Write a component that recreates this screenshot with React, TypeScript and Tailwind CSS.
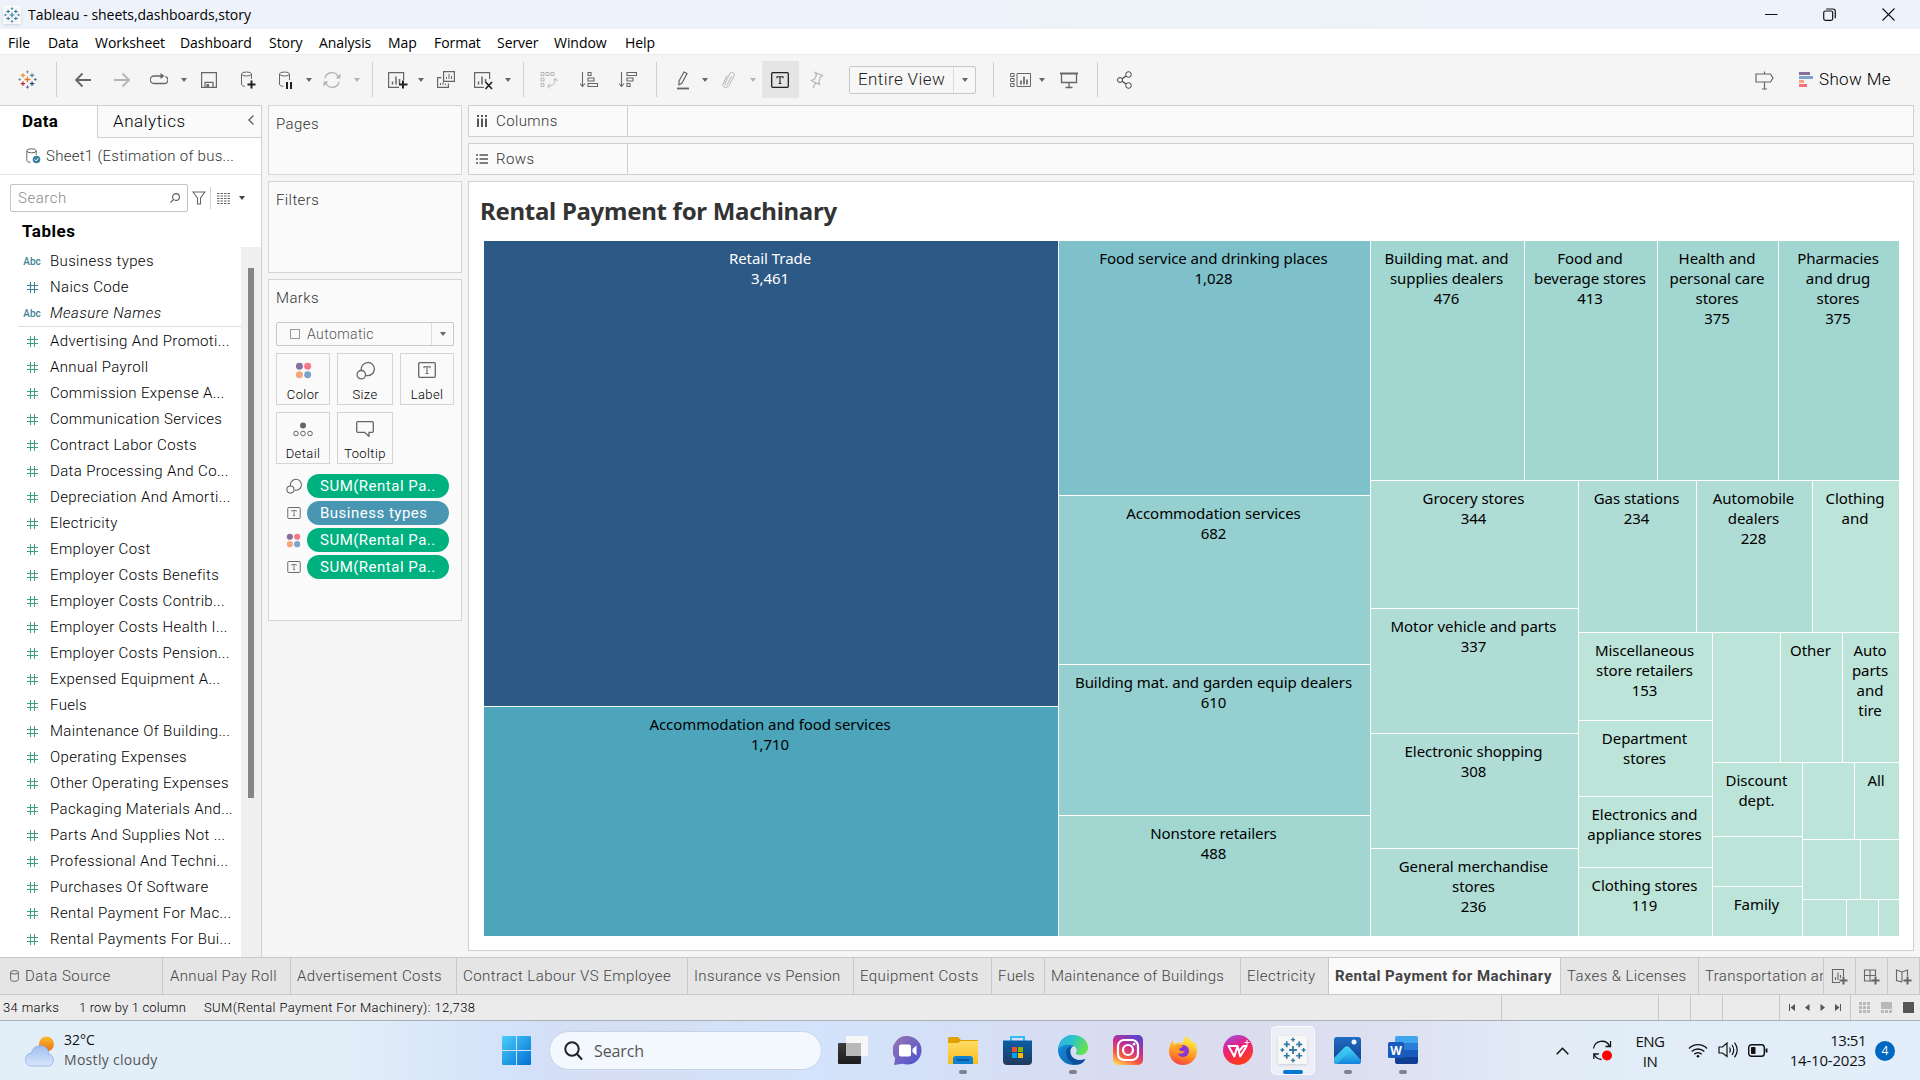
import React from "react";

const ui = "font-[Roboto,'Liberation_Sans',sans-serif] font-light";
const seg = "font-['Open_Sans','Noto_Sans',sans-serif]";
const G = "#666666";

/* ---------- small drawings ---------- */

function Caret({ c = G, className = "" }: { c?: string; className?: string }) {
  return (
    <svg width="6" height="4" viewBox="0 0 6 4" className={"shrink-0 " + className}>
      <path d="M0 0h6L3 4z" fill={c} />
    </svg>
  );
}

function Ico({ w, h = 20, className = "", children }: { w: number; h?: number; className?: string; children: React.ReactNode }) {
  return (
    <svg width={w} height={h} viewBox={`0 0 ${w} ${h}`} fill="none" stroke={G} className={"shrink-0 " + className}>
      {children}
    </svg>
  );
}

function Divider({ className = "" }: { className?: string }) {
  return <div className={"h-[35px] w-px shrink-0 bg-[#d0d0d0] " + className} />;
}

function plus(x: number, y: number, r: number, c: string, w = 1.2) {
  return <path key={`${x}-${y}`} d={`M${x - r} ${y}h${2 * r}M${x} ${y - r}v${2 * r}`} stroke={c} strokeWidth={w} />;
}

function TableauMark({ size, mono }: { size: number; mono?: boolean }) {
  const b = "#2f79a6";
  const c = (x: string) => (mono ? b : x);
  return (
    <svg width={size} height={size} viewBox="0 0 20 20" fill="none" className="shrink-0">
      {plus(10, 10, 3, c("#e8762c"), 1.4)}
      {plus(5.2, 5.6, 2.3, c("#eb9129"), 1.3)}
      {plus(14.8, 5.6, 2.3, c("#5b879b"), 1.3)}
      {plus(5.2, 14.4, 2.3, c("#c72035"), 1.3)}
      {plus(14.8, 14.4, 2.3, c("#1f447e"), 1.3)}
      {plus(10, 2, 1.6, c("#7199a6"), 1)}
      {plus(10, 18, 1.6, c("#5b6591"), 1)}
      {plus(1.8, 10, 1.5, c("#7199a6"), 1)}
      {plus(18.2, 10, 1.5, c("#5b6591"), 1)}
    </svg>
  );
}

function TBox({ w, h, c = G, className = "" }: { w: number; h: number; c?: string; className?: string }) {
  return (
    <svg width={w} height={h} viewBox="0 0 18 16" fill="none" stroke={c} className={"shrink-0 " + className}>
      <rect x=".7" y=".7" width="16.6" height="14.6" rx="1" strokeWidth="1.3" />
      <path d="M6 6.2V4.7h6v1.5M9 4.7v6.8M7.6 11.5h2.8" strokeWidth="1.1" />
    </svg>
  );
}

function SizeIcon({ size }: { size: number }) {
  return (
    <svg width={size} height={size} viewBox="0 0 18 18" fill="none" stroke={G} strokeWidth="1.2" className="shrink-0">
      <path d="M5.2 9.2A6.2 6.2 0 1 1 9.6 13.6" />
      <circle cx="5" cy="13" r="4" />
    </svg>
  );
}

function ColorIcon({ size }: { size: number }) {
  return (
    <svg width={size} height={size} viewBox="0 0 18 18" className="shrink-0">
      <circle cx="4.7" cy="4.5" r="3.7" fill="#8a6f9c" />
      <circle cx="13.4" cy="4.5" r="3.7" fill="#f2788a" />
      <circle cx="4.7" cy="13.4" r="3.7" fill="#f2a77f" />
      <circle cx="13.4" cy="13.4" r="3.7" fill="#7ba3cc" />
    </svg>
  );
}

function Cylinder({ className = "" }: { className?: string }) {
  return (
    <svg width="9" height="12" viewBox="0 0 9 12" fill="none" stroke="#666" className={"shrink-0 " + className}>
      <path d="M.6 2.3v7.2c0 2.4 7.8 2.4 7.8 0V2.3" />
      <ellipse cx="4.5" cy="2.3" rx="3.9" ry="1.7" />
    </svg>
  );
}

/* ---------- window chrome ---------- */

function TitleBar() {
  return (
    <div className={`flex h-[29px] shrink-0 items-center bg-linear-to-r from-[#eef2fb] from-50% via-[#edf3f6] via-60% to-[#eef2fb] to-80% ${seg}`}>
      <div className="ml-[3px] flex h-[19px] w-[18px] items-center justify-center bg-[#f8f8f8] shadow">
        <TableauMark size={16} mono />
      </div>
      <span className="ml-[7px] text-[14px] tracking-[-0.02px] text-black">Tableau - sheets,dashboards,story</span>
      <div className="mr-[25px] ml-auto flex items-center">
        <svg width="13" height="13" viewBox="0 0 13 13" stroke="#111" fill="none"><path d="M0 6.5h12.5" /></svg>
        <svg width="13" height="13" viewBox="0 0 13 13" stroke="#111" fill="none" strokeWidth="1.2" className="ml-[45px]">
          <rect x=".7" y="3" width="9" height="9.3" rx="1.8" />
          <path d="M3.2 1h6.6c1.6 0 2.5 1 2.5 2.5v6.7" />
        </svg>
        <svg width="13" height="13" viewBox="0 0 13 13" stroke="#111" fill="none" strokeWidth="1.1" className="ml-[46px]"><path d="M.5 .5l12 12M12.500 .5l-12 12" /></svg>
      </div>
    </div>
  );
}

function MenuBar() {
  const items: [string, string][] = [
    ["File", "w-[40px]"], ["Data", "w-[47px]"], ["Worksheet", "w-[85px]"], ["Dashboard", "w-[89px]"],
    ["Story", "w-[50px]"], ["Analysis", "w-[69px]"], ["Map", "w-[46px]"], ["Format", "w-[63px]"],
    ["Server", "w-[57px]"], ["Window", "w-[71px]"], ["Help", "w-[50px]"],
  ];
  return (
    <div className={`flex h-[25px] shrink-0 items-center bg-white pt-px pl-2 text-[14px] tracking-[-0.05px] text-black ${seg}`}>
      {items.map(([t, w]) => <span key={t} className={`${w} whitespace-nowrap`}>{t}</span>)}
    </div>
  );
}

function Toolbar() {
  const dim = "#b5b5b5";
  return (
    <div className={`flex h-[51px] shrink-0 items-center border-t border-[#ececec] bg-[#f5f5f5] pb-px ${ui}`}>
      <div className="ml-[18px]"><TableauMark size={19} /></div>
      <Divider className="ml-[19px]" />
      <Ico w={16} className="ml-[18px]"><path d="M16 10H1M7.500 3.500L1 10l6.500 6.500" strokeWidth="1.800" /></Ico>
      <Ico w={16} className="ml-[23px]"><path d="M0 10h15M8.500 3.500L15 10l-6.500 6.500" stroke={dim} strokeWidth="1.800" /></Ico>
      <Ico w={18} className="ml-[20px]"><path d="M11 6H4a3.500 3.500 0 0 0 0 7.500h10a3.500 3.500 0 0 0 1.500-6.800" strokeWidth="1.300" /><path d="M10.500 3l4 3-4 3z" fill={G} stroke="none" /></Ico>
      <Caret className="ml-[13px]" />
      <Ico w={16} className="ml-[14px]"><path d="M.6 2.600h14.800v14.800H.6zM4 17.400v-5h8v5" strokeWidth="1.200" /><path d="M5.500 14h2.500v3.400h-2.500z" fill={G} stroke="none" /></Ico>
      <Ico w={16} className="ml-[23px]"><ellipse cx="6.500" cy="4" rx="5" ry="2" /><path d="M1.500 4v10c0 1.500 1.500 2.300 3.500 2.300M11.500 4v5" /><path d="M11.500 10.500v8M7.500 14.500h8" stroke="#222" strokeWidth="2" /></Ico>
      <Ico w={16} className="ml-[22px]"><ellipse cx="6.500" cy="4" rx="5" ry="2" /><path d="M1.500 4v10c0 1.500 1.500 2.300 4 2.300M11.500 4v6" /><path d="M9 12v7M13 12v7" stroke="#222" strokeWidth="2" /></Ico>
      <Caret className="ml-[12px]" />
      <Ico w={18} className="ml-[11px]"><path d="M2 8a7 7 0 0 1 13-1.500M16 12a7 7 0 0 1-13 1.500" stroke={dim} strokeWidth="1.300" /><path d="M17.500 3.500v5h-5zM.5 16.500v-5h5z" fill={dim} stroke="none" /></Ico>
      <Caret c={dim} className="ml-[13px]" />
      <Divider className="ml-[12px]" />
      <Ico w={20} className="ml-[15px]"><path d="M11 17.400H.6V2.600h15V10" strokeWidth="1.200" /><path d="M4.500 14.500v-3M8 14.500v-8M11.500 14.500V9" strokeWidth="1.500" /><path d="M15 10.500v8M11 14.500h8.500" stroke="#222" strokeWidth="2" /></Ico>
      <Caret className="ml-[10px]" />
      <Ico w={18} className="ml-[13px]"><path d="M6.600 1.600h10.800v9.800H6.600zM4.500 7.600H.6v9.800h10.800v-4" strokeWidth="1.200" /><path d="M9.500 9V7M12 9V4M14.500 9V6M3.500 15v-2M6 15v-3M8.500 15v-1.500" /></Ico>
      <Ico w={20} className="ml-[19px]"><path d="M10 17.400H.6V2.600h15V9" strokeWidth="1.200" /><path d="M4.500 14.500v-3M8 14.500v-8M11.500 12V9" strokeWidth="1.500" /><path d="M11.500 12l6.500 7M18 12l-6.500 7" stroke="#222" strokeWidth="1.700" /></Ico>
      <Caret className="ml-[11px]" />
      <Divider className="ml-[12px]" />
      <Ico w={18} className="ml-[16px]"><path d="M1 2.500h3v3H1zM6 2.500h3v3H6zM11 2.500h3v3h-3zM1 8h3v3H1zM1 13.500h3v3H1zM8 16c5 0 7-2 7.500-7M13 10.500l2.500-2 2 2.500M10 13.500L7.500 16l2.500 2.500" stroke={dim} /></Ico>
      <Ico w={18} className="ml-[22px]"><path d="M2.500 2v14M0 13.500l2.500 3 2.500-3M8 2.500h3v3H8zM8 8h6v3H8zM8 13.500h9.500v3H8z" strokeWidth="1.100" /></Ico>
      <Ico w={18} className="ml-[21px]"><path d="M2.500 2v14M0 13.500l2.500 3 2.500-3M8 2.500h9.500v3H8zM8 8h6v3H8zM8 13.500h3v3H8z" strokeWidth="1.100" /></Ico>
      <Divider className="ml-[19px]" />
      <Ico w={14} className="ml-[19px]"><path d="M3 11L8 2l3 1.500-5 9.500-3 2z" strokeWidth="1.200" /><path d="M1 18.500h12" strokeWidth="1.800" /></Ico>
      <Caret className="ml-[12px]" />
      <Ico w={14} className="ml-[14px]"><path d="M9.500 6l-4 8c-1 1.800-3 .5-2.300-1L7.500 4c1.700-3.500 6-1 4.500 2l-5 9.500c-2.500 4-7.500 1.500-5.500-2.500L5 5.500" stroke={dim} /></Ico>
      <Caret c={dim} className="ml-[14px]" />
      <div className="ml-[6px] flex h-[37px] w-[37px] items-center justify-center bg-[#e5e5e5] pr-px"><TBox w={18} h={16} c="#222" /></div>
      <Ico w={14} className="ml-[11px]"><path d="M5 2.500l7.500 3-2 1.500-1.500 4 .5 3.500L1.500 10.500l3-1.500L6.500 5zM5.500 12.500L3 18" stroke={dim} strokeWidth="1.200" /></Ico>
      <div className="ml-[25px] flex h-[28px] w-[127px] items-center rounded-[2px] border border-[#c8c8c8] bg-[#f7f7f7] text-[17px] text-[#222]">
        <span className="w-[103px] pt-px pl-[8px] tracking-[0.4px] whitespace-nowrap">Entire View</span>
        <div className="flex h-full flex-1 items-center justify-center border-l border-[#dcdcdc]"><Caret /></div>
      </div>
      <Divider className="ml-[17px]" />
      <Ico w={22} className="ml-[16px]"><path d="M.6 3.500h3.500v3H.6zM.6 8.500h3.500v3H.6zM.6 13.500h3.500v3H.6zM7 3.500h13.500v13H7z" /><path d="M11 14.500v-4M14 14.500v-8M17 14.500v-5" strokeWidth="1.700" /></Ico>
      <Caret className="ml-[7px]" />
      <Ico w={18} className="ml-[15px]"><path d="M0 3.500h18" strokeWidth="2" /><path d="M1.500 4v8.500h15V4M9 12.500v5M5.500 17.500h7" strokeWidth="1.300" /></Ico>
      <Divider className="ml-[19px]" />
      <Ico w={16} className="ml-[19px]"><circle cx="3" cy="10" r="2.500" stroke="#444" /><circle cx="11.500" cy="4.500" r="2.800" stroke="#444" /><circle cx="11.500" cy="15.500" r="2.800" stroke="#444" /><path d="M5.200 8.800L9 6M5.200 11.200L9 14" stroke="#444" strokeWidth="1.300" /></Ico>
      <Ico w={20} className="ml-auto"><path d="M1 4h14.500l2.500 4-2.500 4H1zM9.500 12v7M7 19h5M9.500 1.500V4" strokeWidth="1.200" /></Ico>
      <svg width="14" height="15" viewBox="0 0 14 15" className="mb-px ml-[24px]">
        <path d="M0 0h11v3H0z" fill="#8a6f9c" /><path d="M0 4h14v3H0z" fill="#7ba3cc" /><path d="M0 8h5v3H0z" fill="#f2a77f" /><path d="M0 12h8v3H0z" fill="#f5707f" />
      </svg>
      <span className="mr-[30px] ml-[6px] w-[71px] text-[17px] tracking-[0.35px] whitespace-nowrap text-black">Show Me</span>
    </div>
  );
}

/* ---------- data pane ---------- */

const measures = [
  "Advertising And Promoti...", "Annual Payroll", "Commission Expense A...", "Communication Services",
  "Contract Labor Costs", "Data Processing And Co...", "Depreciation And Amorti...", "Electricity",
  "Employer Cost", "Employer Costs Benefits", "Employer Costs Contrib...", "Employer Costs Health I...",
  "Employer Costs Pension...", "Expensed Equipment A...", "Fuels", "Maintenance Of Building...",
  "Operating Expenses", "Other Operating Expenses", "Packaging Materials And...", "Parts And Supplies Not ...",
  "Professional And Techni...", "Purchases Of Software", "Rental Payment For Mac...", "Rental Payments For Bui...",
];

function Hash({ c }: { c: string }) {
  return (
    <svg width="11" height="11" viewBox="0 0 11 11" stroke={c} fill="none"><path d="M3.500 0v11M7.500 0v11M0 3.500h11M0 7.500h11" /></svg>
  );
}

function Field({ label, icon, italic }: { label: string; icon: React.ReactNode; italic?: boolean }) {
  return (
    <div className="flex h-[26px] items-center">
      <div className="flex w-[28px] justify-center">{icon}</div>
      <span className={"ml-[4px] text-[15px] whitespace-nowrap text-black " + (italic ? "tracking-[0.5px] italic" : "tracking-[0.36px]")}>{label}</span>
    </div>
  );
}

function DataPane() {
  const abc = <span className="text-[10px] font-medium text-[#3f7f96]">Abc</span>;
  return (
    <div className={`flex w-[262px] shrink-0 flex-col border-r border-[#d0d0d0] bg-white ${ui}`}>
      <div className="flex h-[33px] shrink-0 border-t border-[#d0d0d0]">
        <div className="w-[97px] pt-[4px] pl-[22px] text-[17px] leading-[23px] font-bold tracking-[0.3px] text-black">Data</div>
        <div className="flex flex-1 items-center border-b border-l border-[#d0d0d0] bg-[#fafafa] pl-[15px] text-[17px] tracking-[0.55px] text-black">
          Analytics
          <svg width="6" height="10" viewBox="0 0 6 10" fill="none" stroke="#555" strokeWidth="1.200" className="mr-[7px] mb-[3px] ml-auto"><path d="M5.500 .5L.8 5l4.700 4.500" /></svg>
        </div>
      </div>
      <div className="flex h-[37px] shrink-0 items-center border-b border-[#e2e2e2] pl-[26px] text-[15px] text-[#333]">
        <svg width="15" height="16" viewBox="0 0 15 16" fill="none" stroke="#666">
          <ellipse cx="5.500" cy="2.800" rx="4.700" ry="2" /><path d="M.8 2.800v9.500c0 1.300 1.500 2 3.700 2M10.200 2.800v4" />
          <circle cx="10.500" cy="11.500" r="3.800" fill="#3b82a0" stroke="none" /><path d="M8.800 11.500l1.300 1.400 2.200-2.600" stroke="#fff" />
        </svg>
        <span className="ml-[5px] tracking-[0.28px] whitespace-nowrap">Sheet1 (Estimation of bus...</span>
      </div>
      <div className="mt-[9px] ml-[10px] flex h-[28px] shrink-0 items-center">
        <div className="flex h-[28px] w-[178px] items-center justify-between rounded-[2px] border border-[#c4c4c4] pr-[7px] pl-[7px] text-[15px] tracking-[0.55px] text-[#888]">
          Search
          <svg width="10" height="10" viewBox="0 0 10 10" fill="none" stroke="#555" strokeWidth="1.100"><circle cx="6" cy="4" r="3.400" /><path d="M3.600 6.400L.4 9.600" /></svg>
        </div>
        <svg width="14" height="14" viewBox="0 0 14 14" fill="none" stroke="#666" strokeWidth="1.100" className="ml-[4px]"><path d="M1 1h12L8.500 7v6h-3V7z" /></svg>
        <div className="ml-[4px] h-[22px] w-px bg-[#d0d0d0]" />
        <svg width="13" height="11" viewBox="0 0 13 11" stroke="#666" className="ml-[6px]"><path d="M0 .5h13M0 3h13M0 5.500h13M0 8h13M0 10.500h13" strokeDasharray="2.500 1" /></svg>
        <Caret c="#444" className="ml-[9px]" />
      </div>
      <div className="mt-[7px] flex h-[26px] shrink-0 items-center pl-[22px] text-[17px] font-bold tracking-[0.5px] text-black">Tables</div>
      <div className="mt-[2px] flex min-h-0 flex-1">
        <div className="flex w-[241px] shrink-0 flex-col overflow-hidden pl-[18px]">
          <div className="mt-[1px] shrink-0 border-b border-[#ddd]">
            <Field label="Business types" icon={abc} />
            <Field label="Naics Code" icon={<Hash c="#3f7f96" />} />
            <Field label="Measure Names" icon={abc} italic />
          </div>
          <div className="mt-px shrink-0">
            {measures.map((m) => <Field key={m} label={m} icon={<Hash c="#3f9e7d" />} />)}
          </div>
        </div>
        <div className="flex-1 bg-[#efefef] pt-[21px] pl-[7px]"><div className="h-[530px] w-[6px] bg-[#858585]" /></div>
      </div>
    </div>
  );
}

/* ---------- cards ---------- */

function MarkButton({ label, w, children }: { label: string; w: string; children: React.ReactNode }) {
  return (
    <div className={`${w} flex h-[52px] flex-col items-center border border-[#d4d4d4] bg-[#fafafa]`}>
      <div className="mt-[7px] flex h-[18px] items-center">{children}</div>
      <span className="mt-[8px] text-[13px] leading-[16px] tracking-[0.4px] text-black">{label}</span>
    </div>
  );
}

function Pill({ label, color, icon }: { label: string; color: string; icon: React.ReactNode }) {
  return (
    <div className="flex h-[24px] items-center">
      <div className="flex w-[36px] justify-center pl-[13px]">{icon}</div>
      <div className={`${color} ml-[2px] flex h-[24px] w-[142px] items-center rounded-full pt-px pl-[13px] text-[15px] font-normal tracking-[0.5px] whitespace-nowrap text-white`}>{label}</div>
    </div>
  );
}

function Cards() {
  const card = "border border-[#d4d4d4] bg-[#fafafa] text-[#333] text-[15px] shrink-0 tracking-[0.4px]";
  return (
    <div className={`ml-[6px] flex w-[194px] shrink-0 flex-col ${ui}`}>
      <div className={`${card} h-[70px] pt-[7px] pl-[7px]`}>Pages</div>
      <div className={`${card} mt-[6px] h-[92px] pt-[7px] pl-[7px]`}>Filters</div>
      <div className={`${card} mt-[6px] h-[342px] pl-[7px]`}>
        <div className="mt-[7px] h-[22px]">Marks</div>
        <div className="mt-[13px] flex h-[24px] w-[178px] items-center rounded-[2px] border border-[#c8c8c8] text-[14px] text-[#555]">
          <div className="ml-[13px] h-[10px] w-[10px] border border-[#999]" />
          <span className="ml-[7px]">Automatic</span>
          <div className="ml-auto flex h-full w-[22px] items-center justify-center border-l border-[#ddd]"><Caret /></div>
        </div>
        <div className="mt-[7px] flex gap-[7px]">
          <MarkButton label="Color" w="w-[54px]"><ColorIcon size={17} /></MarkButton>
          <MarkButton label="Size" w="w-[56px]"><SizeIcon size={19} /></MarkButton>
          <MarkButton label="Label" w="w-[54px]"><TBox w={18} h={16} /></MarkButton>
        </div>
        <div className="mt-[7px] flex gap-[7px]">
          <MarkButton label="Detail" w="w-[54px]">
            <svg width="20" height="15" viewBox="0 0 20 15" fill="none" stroke={G}><circle cx="10" cy="3.500" r="3" fill={G} stroke="none" /><circle cx="3" cy="11.500" r="2.300" /><circle cx="10" cy="11.500" r="2.300" /><circle cx="17" cy="11.500" r="2.300" /></svg>
          </MarkButton>
          <MarkButton label="Tooltip" w="w-[56px]">
            <svg width="18" height="16" viewBox="0 0 18 16" fill="none" stroke={G} strokeWidth="1.300"><path d="M1.700 .7h14.600q1 0 1 1v8.600q0 1-1 1H13v4L8.500 11.300H1.700q-1 0-1-1V1.700q0-1 1-1z" /></svg>
          </MarkButton>
        </div>
        <div className="mt-[10px] -ml-[7px] flex flex-col gap-[3px]">
          <Pill label="SUM(Rental Pa.." color="bg-[#00b180]" icon={<SizeIcon size={16} />} />
          <Pill label="Business types" color="bg-[#4996b2]" icon={<TBox w={14} h={12} />} />
          <Pill label="SUM(Rental Pa.." color="bg-[#00b180]" icon={<ColorIcon size={15} />} />
          <Pill label="SUM(Rental Pa.." color="bg-[#00b180]" icon={<TBox w={14} h={12} />} />
        </div>
      </div>
    </div>
  );
}

/* ---------- treemap ---------- */

type Node = { size?: number; dir?: "row" | "col"; kids?: Node[]; text?: string; bg?: string };

const light = "bg-[#bce4d8]";
const mid = "bg-[#b0dcd6]";
const teal = "bg-[#a1d6d1]";

const tree: Node = {
  dir: "row",
  kids: [
    { size: 574, dir: "col", kids: [
      { size: 465, text: "Retail Trade\n3,461", bg: "bg-[#2c5985] text-white" },
      { text: "Accommodation and food services\n1,710", bg: "bg-[#4ca5bb]" },
    ] },
    { size: 311, dir: "col", kids: [
      { size: 254, text: "Food service and drinking places\n1,028", bg: "bg-[#7ec1ca]" },
      { size: 168, text: "Accommodation services\n682", bg: "bg-[#95cfcf]" },
      { size: 150, text: "Building mat. and garden equip dealers\n610", bg: "bg-[#95cfcf]" },
      { text: "Nonstore retailers\n488", bg: teal },
    ] },
    { dir: "col", kids: [
      { size: 239, dir: "row", kids: [
        { size: 153, text: "Building mat. and\nsupplies dealers\n476", bg: teal },
        { size: 132, text: "Food and\nbeverage stores\n413", bg: teal },
        { size: 120, text: "Health and\npersonal care\nstores\n375", bg: teal },
        { text: "Pharmacies\nand drug\nstores\n375", bg: teal },
      ] },
      { dir: "row", kids: [
        { size: 207, dir: "col", kids: [
          { size: 127, text: "Grocery stores\n344", bg: mid },
          { size: 124, text: "Motor vehicle and parts\n337", bg: mid },
          { size: 114, text: "Electronic shopping\n308", bg: mid },
          { text: "General merchandise\nstores\n236", bg: mid },
        ] },
        { dir: "col", kids: [
          { size: 151, dir: "row", kids: [
            { size: 117, text: "Gas stations\n234", bg: mid },
            { size: 115, text: "Automobile\ndealers\n228", bg: mid },
            { text: "Clothing\nand", bg: light },
          ] },
          { dir: "row", kids: [
            { size: 133, dir: "col", kids: [
              { size: 87, text: "Miscellaneous\nstore retailers\n153", bg: light },
              { size: 75, text: "Department\nstores", bg: light },
              { size: 70, text: "Electronics and\nappliance stores", bg: light },
              { text: "Clothing stores\n119", bg: light },
            ] },
            { dir: "col", kids: [
              { size: 129, dir: "row", kids: [
                { size: 67, bg: light }, { size: 61, text: "Other", bg: light }, { text: "Auto\nparts\nand\ntire", bg: light },
              ] },
              { dir: "row", kids: [
                { size: 89, dir: "col", kids: [
                  { size: 73, text: "Discount\ndept.", bg: light }, { size: 49, bg: light }, { text: "Family", bg: light },
                ] },
                { dir: "col", kids: [
                  { size: 76, dir: "row", kids: [{ size: 51, bg: light }, { text: "All", bg: light }] },
                  { size: 59, dir: "row", kids: [{ size: 57, bg: light }, { bg: light }] },
                  { dir: "row", kids: [{ size: 43, bg: light }, { size: 31, bg: light }, { bg: light }] },
                ] },
              ] },
            ] },
          ] },
        ] },
      ] },
    ] },
  ],
};

function Cell({ node }: { node: Node }) {
  const flex = node.size ? `0 0 ${node.size}px` : "1 1 0px";
  if (node.kids) {
    return (
      <div style={{ flex }} className={"flex min-h-0 min-w-0 gap-px " + (node.dir === "row" ? "flex-row" : "flex-col")}>
        {node.kids.map((k, i) => <Cell key={i} node={k} />)}
      </div>
    );
  }
  return (
    <div style={{ flex }} className={`min-h-0 min-w-0 overflow-hidden pt-[7px] pr-[2px] text-center text-[15px] leading-[20px] tracking-[-0.05px] whitespace-pre ${node.bg}`}>
      {node.text}
    </div>
  );
}

function Shelf({ label, children }: { label: string; children: React.ReactNode }) {
  return (
    <div className={`mb-[6px] flex h-[32px] shrink-0 border border-[#d0d0d0] bg-[#fafafa] ${ui}`}>
      <div className="flex w-[159px] items-center border-r border-[#d0d0d0] pl-[7px] text-[15px] tracking-[0.4px] text-[#333]">
        {children}
        <span className="mt-px ml-[8px]">{label}</span>
      </div>
    </div>
  );
}

function Worksheet() {
  return (
    <div className="mr-[6px] ml-[6px] flex min-w-0 flex-1 flex-col">
      <Shelf label="Columns">
        <svg width="12" height="12" viewBox="0 0 12 12" stroke="#555" strokeWidth="2"><path d="M2 0v2M6 0v2M10 0v2M2 3.500V12M6 3.500V12M10 3.500V12" /></svg>
      </Shelf>
      <Shelf label="Rows">
        <svg width="12" height="12" viewBox="0 0 12 12" stroke="#555" strokeWidth="1.700"><path d="M0 2h2M0 6h2M0 10h2M3.500 2H12M3.500 6H12M3.500 10H12" /></svg>
      </Shelf>
      <div className="mb-[6px] flex min-h-0 flex-1 flex-col border border-[#d0d0d0] bg-white font-['Noto_Sans','Open_Sans',sans-serif]">
        <h1 className="h-[59px] pt-[14px] pl-[11px] text-[24px] leading-[30px] font-bold tracking-[-0.28px] text-[#333]">Rental Payment for Machinary</h1>
        <div className="ml-[15px] flex h-[695px] w-[1415px] text-black"><Cell node={tree} /></div>
      </div>
    </div>
  );
}

/* ---------- sheet tabs and status ---------- */

function SheetTabs() {
  const tabs: [string, string][] = [
    ["Annual Pay Roll", "w-[128px] pl-[7px] tracking-[0.35px]"], ["Advertisement Costs", "w-[166px] pl-[6px] tracking-[0.4px]"],
    ["Contract Labour VS Employee", "w-[231px] pl-[6px] tracking-[0.45px]"], ["Insurance vs Pension", "w-[166px] pl-[6px] tracking-[0.35px]"],
    ["Equipment Costs", "w-[138px] pl-[6px] tracking-[0.4px]"], ["Fuels", "w-[53px] pl-[6px] tracking-[0.35px]"],
    ["Maintenance of Buildings", "w-[196px] pl-[6px] tracking-[0.3px]"], ["Electricity", "w-[88px] pl-[6px] tracking-[0.45px]"],
    ["Rental Payment for Machinary", "w-[232px] pl-[6px] bg-[#fafafa] font-bold text-[#444] tracking-[0.45px] pb-px"],
    ["Taxes & Licenses", "w-[138px] pl-[6px] tracking-[0.4px]"], ["Transportation and", "w-[125px] pl-[6px] tracking-[0.35px]"],
  ];
  const book = [
    <path key="a" d="M9 14.500H1.500V1.500h11V8M4.500 12V9M7 12V4.500M9.500 10V7" />,
    <path key="b" d="M9 13H1.500V2h11v6M1.500 7.500h11M7 2v11" />,
    <path key="c" d="M7 14l-5.500-1.500V2L7 4l5.500-2v6M7 4v10" />,
  ];
  return (
    <div className={`flex h-[38px] shrink-0 border-t border-b border-[#c8c8c8] bg-[#e5e5e5] text-[15px] text-[#444] ${ui}`}>
      <div className="flex w-[163px] shrink-0 items-center border-r border-[#c8c8c8] pt-px pl-[10px]">
        <Cylinder className="mb-[2px]" />
        <span className="ml-[6px] tracking-[0.5px]">Data Source</span>
      </div>
      {tabs.map(([t, c]) => (
        <div key={t} className={`flex shrink-0 items-center overflow-hidden border-r border-[#c8c8c8] pt-px whitespace-nowrap ${c}`}>{t}</div>
      ))}
      {book.map((p, i) => (
        <div key={i} className="flex w-[32px] shrink-0 items-center justify-center border-r border-[#c8c8c8]">
          <svg width="17" height="17" viewBox="0 0 17 17" fill="none" stroke="#666" strokeWidth="1.100">{p}<path d="M12.500 8.500v8M8.500 12.500h8" strokeWidth="2" /></svg>
        </div>
      ))}
    </div>
  );
}

function StatusBar() {
  return (
    <div className={`flex h-[26px] shrink-0 border-b border-[#a9aeb8] bg-[#ebebeb] text-[13px] text-black ${ui}`}>
      <span className="w-[76px] pl-[3px] leading-[25px] tracking-[0.35px]">34 marks</span>
      <span className="w-[128px] pl-[3px] leading-[25px] tracking-[0.15px]">1 row by 1 column</span>
      <span className="leading-[25px] tracking-[0.4px]">SUM(Rental Payment For Machinery): 12,738</span>
      <div className="ml-auto flex">
        <div className="w-[157px] border-l border-[#c8c8c8]" />
        <div className="w-[32px] border-l border-[#c8c8c8]" />
        <div className="w-[32px] border-l border-[#c8c8c8]" />
        <div className="w-[57px] border-l border-[#c8c8c8]" />
        <div className="flex w-[71px] items-center gap-[10px] border-l border-[#c8c8c8] pl-[9px]">
          <svg width="6" height="7" viewBox="0 0 6 7" fill="#555"><path d="M0 0h1v7H0zM6 0v7L1.500 3.500z" /></svg>
          <svg width="5" height="7" viewBox="0 0 5 7" fill="#555"><path d="M4.500 0v7L0 3.500z" /></svg>
          <svg width="5" height="7" viewBox="0 0 5 7" fill="#555"><path d="M.5 0v7L5 3.500z" /></svg>
          <svg width="6" height="7" viewBox="0 0 6 7" fill="#555"><path d="M5 0h1v7H5zM0 0v7l4.500-3.500z" /></svg>
        </div>
        <div className="flex w-[70px] items-center gap-[11px] border-l border-[#c8c8c8] pl-[8px]">
          <svg width="11" height="11" viewBox="0 0 11 11" fill="#b8b8b8"><path d="M0 0h3v3H0zM4 0h3v3H4zM8 0h3v3H8zM0 4h3v3H0zM4 4h3v3H4zM8 4h3v3H8zM0 8h3v3H0zM4 8h3v3H4zM8 8h3v3H8z" /></svg>
          <svg width="11" height="11" viewBox="0 0 11 11" fill="#b8b8b8"><path d="M0 0h11v7H0zM0 8h3v3H0zM4 8h3v3H4zM8 8h3v3H8z" /></svg>
          <div className="h-[11px] w-[11px] bg-[#555]" />
        </div>
      </div>
    </div>
  );
}

/* ---------- taskbar ---------- */

function AppSlot({ mark, active, children }: { mark?: boolean; active?: boolean; children: React.ReactNode }) {
  return (
    <div className="flex w-[55px] justify-center pt-[5px]">
      <div className={"flex h-[49px] w-[44px] flex-col items-center rounded-[5px] " + (active ? "border border-white/70 bg-white/50 pt-[8px]" : "pt-[9px]")}>
        <div className="flex h-[30px] items-center">{children}</div>
        {mark && <div className="mt-[5px] h-[4px] w-[8px] rounded-full bg-[#7d828c]" />}
        {active && <div className="mt-[5px] h-[4px] w-[20px] rounded-full bg-[#0078d4]" />}
      </div>
    </div>
  );
}

function Grad({ id, a, b, c, x2 = 0, y2 = 1 }: { id: string; a: string; b: string; c?: string; x2?: number; y2?: number }) {
  return (
    <linearGradient id={id} x1="0" y1="0" x2={x2} y2={y2}>
      <stop offset="0" stopColor={a} />
      {c && <stop offset=".5" stopColor={c} />}
      <stop offset="1" stopColor={b} />
    </linearGradient>
  );
}

function Taskbar() {
  return (
    <div className={`flex min-h-0 flex-1 bg-[linear-gradient(90deg,#e2eef8_0%,#e2eef8_18%,#d3e1fa_27%,#d6def3_32%,#d2e3fb_42%,#d6dff6_52%,#d9dbee_60%,#dde0f0_72%,#e1ecf7_80%,#e2eef9_100%)] ${seg}`}>
      <div className="flex w-[489px] shrink-0 pl-[25px]">
        <svg width="31" height="31" viewBox="0 0 31 31" className="mt-[15px]">
          <defs><Grad id="sun" a="#f7c02f" b="#ee6b16" /><Grad id="cl" a="#9fbdf0" b="#d9e6fb" /></defs>
          <circle cx="21.500" cy="8" r="7.500" fill="url(#sun)" />
          <path d="M7 30a6.500 6.500 0 0 1-.5-13A9 9 0 0 1 22 12.500a6 6 0 0 1 1.500 5.500 6.200 6.200 0 0 1 .5 12z" fill="url(#cl)" stroke="#8aabe8" strokeWidth=".7" />
        </svg>
        <div className="mt-[9px] ml-[8px] text-[14px] leading-[20px] text-[#111]">
          <div>32°C</div>
          <div className="tracking-[0.3px] text-[#555]">Mostly cloudy</div>
        </div>
      </div>
      <div className="flex w-[60px] shrink-0 justify-center pr-[6px]">
        <svg width="29" height="29" viewBox="0 0 29 29" className="mt-[15px]">
          <defs><Grad id="win" a="#4ccdfb" b="#0070d2" x2={1} /></defs>
          <path d="M0 1q0-1 1-1h13v14H0zM15 0h13q1 0 1 1v13H15zM0 15h14v14H1q-1 0-1-1zM15 15h14v13q0 1-1 1H15z" fill="url(#win)" />
        </svg>
      </div>
      <div className="mt-[10px] flex h-[39px] w-[273px] shrink-0 items-center rounded-full border border-[#c9d3e6] bg-[#f3f7fe] pl-[14px] text-[16px] text-[#555]">
        <svg width="19" height="19" viewBox="0 0 19 19" fill="none" stroke="#222" strokeWidth="2"><circle cx="8" cy="8" r="6.700" /><path d="M13 13l4.500 5" strokeLinecap="round" /></svg>
        <span className="ml-[11px] tracking-[-0.1px]">Search</span>
      </div>
      <div className="ml-[3px] flex shrink-0">
        <AppSlot>
          <svg width="30" height="28" viewBox="0 0 30 28"><defs><Grad id="tv" a="#3c3c3c" b="#1c1c1c" /></defs><rect y="7" width="23" height="21" rx="1" fill="url(#tv)" /><rect x="8" width="22" height="20" rx="1" fill="#f7f7f7" /><path d="M8 7h15v13H8z" fill="#b9b9b9" /></svg>
        </AppSlot>
        <AppSlot>
          <svg width="29" height="29" viewBox="0 0 29 29"><defs><Grad id="ch" a="#9a78b4" b="#4a50cf" x2={1} /></defs><path d="M14.500 0a14.300 14.300 0 1 1-5 27.800L1 29l1.200-6.500A14.300 14.300 0 0 1 14.500 0z" fill="url(#ch)" /><rect x="6" y="8.500" width="12" height="12" rx="2" fill="#fff" /><path d="M19.500 13l4-3.500v10l-4-3.500z" fill="#fff" /></svg>
        </AppSlot>
        <AppSlot mark>
          <svg width="30" height="27" viewBox="0 0 30 27"><defs><Grad id="fo" a="#ffdc66" b="#fbbc1c" /></defs><path d="M0 1.500Q0 0 1.500 0H10l3 3h17v8H0z" fill="#dfa000" /><path d="M0 6h10l3-2h17v23H0z" fill="url(#fo)" /><path d="M5 27v-5q0-3 3-3h14q3 0 3 3v5z" fill="#0f7fcf" /><path d="M9 23h12" stroke="#0b4f93" strokeWidth="1.500" /></svg>
        </AppSlot>
        <AppSlot>
          <svg width="29" height="29" viewBox="0 0 29 29"><defs><Grad id="st" a="#0a5ea8" b="#223a5c" /></defs><path d="M8 6V1h13v5" fill="none" stroke="#31bdf3" strokeWidth="2" /><path d="M0 4.500h29V25q0 4-4 4H4q-4 0-4-4z" fill="url(#st)" /><path d="M9 11h5v5H9z" fill="#f25022" /><path d="M15 11h5v5h-5z" fill="#7fba00" /><path d="M9 17h5v5H9z" fill="#00a4ef" /><path d="M15 17h5v5h-5z" fill="#ffb900" /></svg>
        </AppSlot>
        <AppSlot mark>
          <svg width="30" height="30" viewBox="0 0 30 30">
            <defs><Grad id="e1" a="#2fb3ea" b="#63e052" x2={1} y2={0.3} c="#2bc3c9" /><Grad id="e2" a="#1796e6" b="#0c59a4" x2={1} /></defs>
            <path d="M15 0a15 15 0 0 0 0 30c5 0 9.500-2 12-6-5 2-12 1-14-4-1.500-4 0-8 3-9z" fill="url(#e2)" />
            <path d="M.2 14C1 5.500 7 0 15 0c9 0 15 6 15 12.500 0 5-4 7.500-8 7.500-3 0-4.500-1-4-2 2-3 0-7-5-8-5-.9-10 .5-12.800 4z" fill="url(#e1)" />
            <path d="M8 17c0 7 6 13 13 12.500 2.500-.5 5-2.500 6.500-5.500-6 3-15 .5-15.500-8 0-2 .5-3.500 1.500-4.500C10 12 8 14 8 17z" fill="#0c4f9a" />
          </svg>
        </AppSlot>
        <AppSlot>
          <svg width="30" height="30" viewBox="0 0 30 30" fill="none">
            <defs><linearGradient id="ig" x1=".2" y1="1" x2=".7" y2="0"><stop offset="0" stopColor="#ffd25a" /><stop offset=".3" stopColor="#f4583f" /><stop offset=".6" stopColor="#c92d8f" /><stop offset="1" stopColor="#5b45c9" /></linearGradient></defs>
            <rect width="30" height="30" rx="5" fill="url(#ig)" /><rect x="5" y="5" width="20" height="20" rx="6" stroke="#fff" strokeWidth="2.200" /><circle cx="15" cy="15" r="5" stroke="#fff" strokeWidth="2.200" /><circle cx="21" cy="9.200" r="1.400" fill="#fff" />
          </svg>
        </AppSlot>
        <AppSlot>
          <svg width="28" height="29" viewBox="0 0 28 29">
            <defs><Grad id="ff" a="#ffdf3a" b="#ee1561" c="#ff8a1f" x2={-0.3} /></defs>
            <path d="M18 0c1 3 5 5 6.500 7l.3-1.500C27 8 28 11.500 28 15a14 14 0 0 1-28 0C0 11 1.500 7 3.500 4.500L5 8c1.500-.8 3-1 4.500-.7L11 5c0 1.500.5 2.500 1.500 3.500C14.500 5 15 2 18 0z" fill="url(#ff)" />
            <circle cx="14" cy="15" r="6" fill="#8a36d6" /><path d="M7 9c3-1 6 0 7 1.500-1 1.500-3.500 1-4 3 1 2 4 2 6 1-1 4-8 4.500-9.500 0-.6-2-.5-4 .5-5.500z" fill="#ff9a26" />
          </svg>
        </AppSlot>
        <AppSlot>
          <svg width="30" height="30" viewBox="0 0 30 30" fill="none">
            <defs><Grad id="wp" a="#8e55f0" b="#ff3a1f" c="#ed1e79" x2={0.4} /></defs>
            <circle cx="15" cy="15" r="15" fill="url(#wp)" /><path d="M5.500 11h9l-3.200 10.500zM14.500 11l2.700 10.500 6.500-10.500h-3.200l-4.500 5" stroke="#fff" strokeWidth="2" strokeLinejoin="round" strokeLinecap="round" /><path d="M24 5v5M21.500 7.500h5" stroke="#fff" />
          </svg>
        </AppSlot>
        <AppSlot active>
          <div className="flex h-[28px] w-[29px] items-center justify-center bg-[#f7f7f5] shadow"><TableauMark size={26} mono /></div>
        </AppSlot>
        <AppSlot mark>
          <svg width="27" height="27" viewBox="0 0 27 27"><defs><Grad id="ph" a="#1f6bc4" b="#123f8c" /><Grad id="p2" a="#45e0f5" b="#1583dc" /></defs><rect width="27" height="27" rx="3" fill="url(#ph)" /><path d="M0 21L11 10q2-1.500 4 0l12 13v1q0 3-3 3H3q-3 0-3-3z" fill="url(#p2)" /><path d="M11 10L0 21v3q0 3 3 3l14-14.500z" fill="#3cc7f0" opacity=".6" /><circle cx="20" cy="5" r="2.500" fill="#eef6ff" /></svg>
        </AppSlot>
        <AppSlot mark>
          <svg width="30" height="28" viewBox="0 0 30 28"><path d="M7 2q0-2 2-2h19q2 0 2 2v5H7z" fill="#41a5ee" /><path d="M7 7h23v7H7z" fill="#2b7cd3" /><path d="M7 14h23v7H7z" fill="#185abd" /><path d="M7 21h23v5q0 2-2 2H9q-2 0-2-2z" fill="#103f91" /><rect y="6" width="16" height="16" rx="1.500" fill="#185abd" /><text x="8" y="18.500" fontSize="12" fontWeight="700" fill="#fff" textAnchor="middle" fontFamily="Open Sans">W</text></svg>
        </AppSlot>
      </div>
      <div className="ml-auto flex shrink-0 text-[#111]">
        <svg width="13" height="8" viewBox="0 0 13 8" fill="none" stroke="#111" strokeWidth="1.500" className="mt-[26px]"><path d="M.7 7.300l5.800-6 5.800 6" /></svg>
        <svg width="22" height="22" viewBox="0 0 22 22" fill="none" stroke="#111" strokeWidth="1.300" className="mt-[19px] ml-[23px]"><path d="M1.500 8.500a8.500 8.500 0 0 1 16-2.500M18.500 1v5.500h-5M1.800 19v-5h5M2.500 15a9 9 0 0 0 7 4.500" /><circle cx="15" cy="15.500" r="5" fill="#fd0000" stroke="none" /></svg>
        <div className="mt-[10px] ml-[18px] w-[36px] text-center text-[15px] leading-[20px] tracking-[-0.5px]"><div>ENG</div><div>IN</div></div>
        <svg width="20" height="16" viewBox="0 0 20 16" fill="none" stroke="#111" strokeWidth="1.400" className="mt-[21px] ml-[20px]"><path d="M1 6.500a12.500 12.500 0 0 1 18 0M3.700 9.500a9 9 0 0 1 12.600 0M6.300 12.200a5.300 5.300 0 0 1 7.400 0" /><circle cx="10" cy="14.300" r="1.300" fill="#111" stroke="none" /></svg>
        <svg width="21" height="18" viewBox="0 0 21 18" fill="none" stroke="#111" strokeWidth="1.200" className="mt-[20px] ml-[10px]"><path d="M1 6h3.500L9 2v13.500L4.500 12H1zM11.500 6.500q1.700 2.500 0 5M14 4q3.500 5 0 10M16.500 1.700q5.500 7.300 0 14.600" /></svg>
        <svg width="20" height="13" viewBox="0 0 20 13" fill="none" stroke="#111" strokeWidth="1.400" className="mt-[23px] ml-[9px]"><rect x=".7" y=".7" width="15.600" height="11.600" rx="2.800" /><rect x="3" y="3" width="4.500" height="7" rx=".8" fill="#111" stroke="none" /><path d="M18.500 4.500v4" strokeWidth="2" /></svg>
        <div className="mt-[9px] ml-[17px] w-[81px] text-right text-[15px] leading-[20px] tracking-[-0.2px] whitespace-nowrap"><div className="tracking-[-0.5px]">13:51</div><div>14-10-2023</div></div>
        <div className="mt-[20px] mr-[25px] ml-[9px] flex h-[20px] w-[20px] items-center justify-center rounded-full bg-[#0067c0] text-[12px] text-white">4</div>
      </div>
    </div>
  );
}

export default function App() {
  return (
    <div className="flex h-[1080px] w-[1920px] flex-col overflow-hidden bg-[#f5f5f5]">
      <TitleBar />
      <MenuBar />
      <Toolbar />
      <div className="flex h-[852px] shrink-0">
        <DataPane />
        <Cards />
        <Worksheet />
      </div>
      <SheetTabs />
      <StatusBar />
      <Taskbar />
    </div>
  );
}
